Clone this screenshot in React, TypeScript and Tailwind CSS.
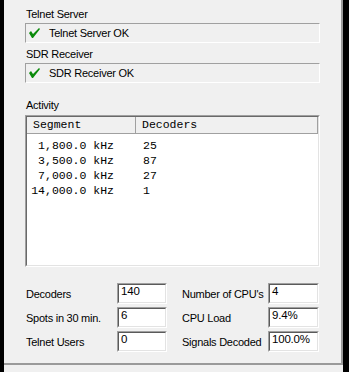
import React from 'react';

const rows = [
  { seg: '1,800.0 kHz', dec: '25' },
  { seg: '3,500.0 kHz', dec: '87' },
  { seg: '7,000.0 kHz', dec: '27' },
  { seg: '14,000.0 kHz', dec: '1' },
];

function Check() {
  return (
    <svg width="12" height="10" viewBox="0 0 12 10" className="ml-[3px] shrink-0">
      <polygon points="0,5 2,3 4,6 10,0 11,1 4,10 3,10" fill="#0a8a0a" />
    </svg>
  );
}

function StatusBox({ text }: { text: string }) {
  return (
    <div className="mt-[2px] flex h-[20px] w-[295px] items-center border border-t-[#a0a0a0] border-l-[#a0a0a0] border-b-white border-r-white">
      <Check />
      <span className="ml-[8px] leading-[14px]">{text}</span>
    </div>
  );
}

function Field({ value, width }: { value: string; width: string }) {
  return (
    <div className={`h-[21px] ${width} border border-t-[#a0a0a0] border-l-[#a0a0a0] border-b-white border-r-white`}>
      <div className="h-full border border-t-[#5a5a5a] border-l-[#5a5a5a] border-b-[#e3e3e3] border-r-[#e3e3e3] bg-white pl-[2px] text-[11.5px] leading-[13px] tracking-[-0.2px]">
        {value}
      </div>
    </div>
  );
}

export default function App() {
  return (
    <div className="flex h-[372px] w-[349px] bg-black font-['Liberation_Sans',Arial,sans-serif] text-[11px] tracking-[-0.25px] text-black">
      <div className="ml-[4px] flex w-[339px] flex-col bg-[#f0f0f0]">
        <div className="flex h-[365px] flex-col border-b-2 border-r-2 border-[#9a9a9a] pl-[21px]">
          {/* Telnet */}
          <div className="ml-[1px] mt-[7px] h-[14px] leading-[14px]">Telnet Server</div>
          <StatusBox text="Telnet Server OK" />

          {/* SDR */}
          <div className="ml-[1px] mt-[4px] h-[14px] leading-[14px]">SDR Receiver</div>
          <StatusBox text="SDR Receiver OK" />

          {/* Activity list */}
          <div className="ml-[1px] mt-[15px] h-[14px] leading-[14px]">Activity</div>
          <div className="mt-[3px] h-[152px] w-[295px] border border-t-[#a0a0a0] border-l-[#a0a0a0] border-b-white border-r-white">
            <div className="h-full border border-t-[#696969] border-l-[#696969] border-b-[#e3e3e3] border-r-[#e3e3e3] bg-white font-['Liberation_Mono','Courier_New',monospace] text-[11.5px] tracking-normal">
              <div className="flex h-[17px]">
                <div className="w-[109px] border-b border-r border-[#a0a0a0] bg-[#f0f0f0] pl-[6px] leading-[16px]">
                  Segment
                </div>
                <div className="w-[182px] border-b border-r border-[#a0a0a0] bg-[#f0f0f0] pl-[6px] leading-[16px]">
                  Decoders
                </div>
              </div>
              <div className="pt-[4px]">
                {rows.map((r) => (
                  <div key={r.seg} className="flex h-[15px] leading-[15px]">
                    <div className="w-[109px] pr-[22px] text-right">{r.seg}</div>
                    <div className="pl-[7px]">{r.dec}</div>
                  </div>
                ))}
              </div>
            </div>
          </div>

          {/* Stats */}
          <div className="mt-[16px] flex flex-col gap-[3px]">
            {[
              ['Decoders', '140', "Number of CPU's", '4'],
              ['Spots in 30 min.', '6', 'CPU Load', '9.4%'],
              ['Telnet Users', '0', 'Signals Decoded', '100.0%'],
            ].map(([l1, v1, l2, v2]) => (
              <div key={l1} className="flex h-[21px] items-center">
                <div className="w-[92px] whitespace-nowrap pl-[1px] leading-[14px]">{l1}</div>
                <Field value={v1} width="w-[50px]" />
                <div className="ml-[15px] w-[86px] whitespace-nowrap leading-[14px]">{l2}</div>
                <Field value={v2} width="w-[51px]" />
              </div>
            ))}
          </div>
        </div>
      </div>
    </div>
  );
}
